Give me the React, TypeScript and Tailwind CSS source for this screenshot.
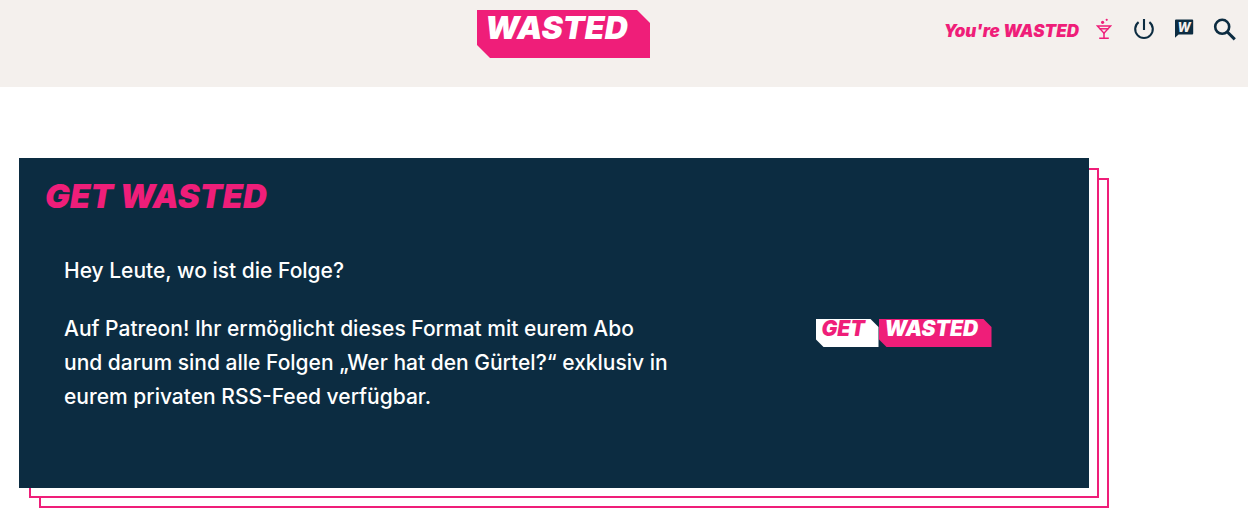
import React from "react";

function CocktailIcon() {
  return (
    <svg viewBox="0 0 16 22" className="h-[22px] w-4" fill="none" stroke="currentColor" strokeWidth="1.5">
      <path d="M1.4 8h13.2L8 15.2z" />
      <path d="M3.6 10.8h8.8" />
      <path d="M8 15v5.2M3.2 20.3h9.6" />
      <circle cx="6.6" cy="4.3" r="1.6" fill="currentColor" stroke="none" />
      <circle cx="10.7" cy="1.8" r="1.1" fill="currentColor" stroke="none" />
    </svg>
  );
}

function PowerIcon() {
  return (
    <svg viewBox="0 0 22 22" className="size-[22px]" fill="none" stroke="currentColor" strokeWidth="2.1">
      <path d="M11 1v11" />
      <path d="M5.6 4.2A8.8 8.8 0 1 0 16.4 4.2" />
    </svg>
  );
}

function ChatIcon() {
  return (
    <svg viewBox="0 0 20 20" className="size-5">
      <path d="M2 1.5h16.2a1 1 0 0 1 1 1v13a1 1 0 0 1-1 1H4.6L1 19.8V2.5a1 1 0 0 1 1-1z" fill="currentColor" />
      <text x="10" y="13.6" textAnchor="middle" fill="#f4f0ed" fontFamily="Inter, sans-serif" fontSize="12.5" fontWeight="800" fontStyle="italic">
        W
      </text>
    </svg>
  );
}

function SearchIcon() {
  return (
    <svg viewBox="0 0 24 24" className="size-6" fill="none" stroke="currentColor" strokeWidth="2.6">
      <circle cx="9.2" cy="8.8" r="7" />
      <path d="M14.4 14l7.4 7.4" strokeWidth="3" />
    </svg>
  );
}

export default function App() {
  return (
    <div className="min-h-screen bg-white font-['Inter',sans-serif]">
      <header className="grid h-[87px] grid-cols-[477fr_173px_598fr] items-start bg-[#f4f0ed] pt-2.5">
        <a
          href="#start"
          className="col-start-2 block h-12 bg-[#ef1e79] pl-2 text-[32px] leading-[36px] font-black text-white italic [clip-path:polygon(0_0,160px_0,100%_13px,100%_100%,13px_100%,0_35px)]"
        >
          WASTED
        </a>
        <nav className="flex items-start justify-end pt-2 pr-[11px] text-[#0c2c41]">
          <a href="#wasted" className="flex items-start gap-[17px] text-[#ef1e79]">
            <span className="text-[17px] leading-[26px] font-black italic">You're WASTED</span>
            <CocktailIcon />
          </a>
          <button type="button" aria-label="Logout" className="ml-[21px]">
            <PowerIcon />
          </button>
          <a href="#chat" aria-label="Community" className="ml-[19px]">
            <ChatIcon />
          </a>
          <button type="button" aria-label="Suche" className="ml-[19px]">
            <SearchIcon />
          </button>
        </nav>
      </header>

      <main className="pt-[71px] pr-[159px] pl-[19px]">
        <section className="relative isolate">
          <div className="absolute inset-0 -z-10 translate-5 border-2 border-[#ef1e79] bg-white" />
          <div className="absolute inset-0 -z-10 translate-2.5 border-2 border-[#ef1e79] bg-white" />
          <div className="min-h-[330px] bg-[#0c2c41] px-[26px] pt-5 pb-[74px]">
            <h1 className="text-[33px] leading-9 font-black text-[#ef1e79] italic">GET WASTED</h1>
            <div className="flex items-center pt-10 pl-[19px]">
              <div className="w-[620px] shrink-0 text-[21px] leading-[34px] font-medium text-white">
                <p className="mb-6">Hey Leute, wo ist die Folge?</p>
                <p>
                  Auf Patreon! Ihr ermöglicht dieses Format mit eurem Abo
                  <br />
                  und darum sind alle Folgen „Wer hat den Gürtel?“ exklusiv in
                  <br />
                  eurem privaten RSS-Feed verfügbar.
                </p>
              </div>
              <div className="flex flex-1 justify-center pb-0.5 pl-[60px]">
                <a href="#get-wasted" className="flex text-[21px] leading-5 font-black italic">
                  <span className="h-7 w-[63px] bg-white pl-1.5 text-[#ef1e79] [clip-path:polygon(0_0,55px_0,100%_8px,100%_100%,8px_100%,0_20px)]">
                    GET
                  </span>
                  <span className="h-7 w-[113px] bg-[#ef1e79] pl-1.5 text-white [clip-path:polygon(0_0,105px_0,100%_8px,100%_100%,8px_100%,0_20px)]">
                    WASTED
                  </span>
                </a>
              </div>
            </div>
          </div>
        </section>
      </main>
    </div>
  );
}
